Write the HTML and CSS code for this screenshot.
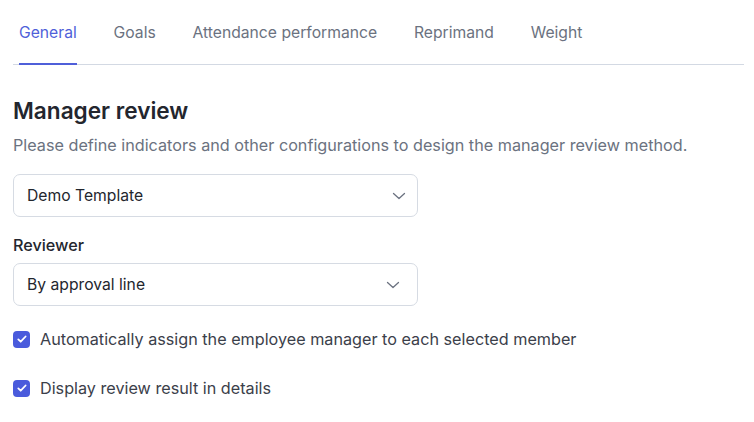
FILE: index.html
```html
<!DOCTYPE html>
<html lang="en">
<head>
    <meta charset="UTF-8">
    <meta name="viewport" content="width=device-width, initial-scale=1.0">
    <title>Manager review</title>
    <link rel="stylesheet" href="styles.css">
</head>
<body>
    <div class="page">
        <nav class="tabs">
            <a class="tab active" href="#">General</a>
            <a class="tab" href="#">Goals</a>
            <a class="tab" href="#">Attendance performance</a>
            <a class="tab" href="#">Reprimand</a>
            <a class="tab" href="#">Weight</a>
        </nav>

        <section class="review">
            <h2 class="title">Manager review</h2>
            <p class="subtitle">Please define indicators and other configurations to design the manager review method.</p>

            <div class="select template-select">
                <span>Demo Template</span>
                <svg class="chevron" width="14" height="14" viewBox="0 0 14 14"><path d="M1.5 4.5l5.5 5 5.5-5" fill="none" stroke="currentColor" stroke-width="1.3" stroke-linecap="round" stroke-linejoin="round"/></svg>
            </div>

            <label class="field-label">Reviewer</label>
            <div class="select reviewer-select">
                <span>By approval line</span>
                <svg class="chevron" width="14" height="14" viewBox="0 0 14 14"><path d="M1.5 4.5l5.5 5 5.5-5" fill="none" stroke="currentColor" stroke-width="1.3" stroke-linecap="round" stroke-linejoin="round"/></svg>
            </div>

            <div class="checks">
                <label class="check">
                    <span class="box"><svg width="16" height="16" viewBox="0 0 16 16"><path d="M4.3 8.4l2.4 2.3 4.9-5.2" fill="none" stroke="#fff" stroke-width="1.8" stroke-linecap="round" stroke-linejoin="round"/></svg></span>
                    Automatically assign the employee manager to each selected member
                </label>
                <label class="check">
                    <span class="box"><svg width="16" height="16" viewBox="0 0 16 16"><path d="M4.3 8.4l2.4 2.3 4.9-5.2" fill="none" stroke="#fff" stroke-width="1.8" stroke-linecap="round" stroke-linejoin="round"/></svg></span>
                    Display review result in details
                </label>
            </div>
        </section>
    </div>
</body>
</html>
```

FILE: styles.css
```css
body {
  margin: 0;
  background: #ffffff;
  font-family: 'Inter', 'Noto Sans', sans-serif;
  color: #23262e;
}

.page {
  padding: 0 10px 0 13px;
}

/* Tab strip */
.tabs {
  display: flex;
  gap: 36.8px;
  padding: 0 6px;
  border-bottom: 1px solid #d3d9e3;
}

.tab {
  padding: 22px 0 19px;
  font-size: 15.7px;
  line-height: 22px;
  color: #6b7280;
  text-decoration: none;
  border-bottom: 2px solid transparent;
  margin-bottom: -1px;
}

.tab.active {
  color: #4f5fd9;
  border-bottom-color: #4f5fd9;
}

/* Review settings */
.review {
  padding-top: 32px;
}

.title {
  margin: 0;
  font-size: 22.6px;
  line-height: 28px;
  font-weight: 600;
  color: #23262e;
}

.subtitle {
  margin: 9px 0 0;
  font-size: 16.2px;
  line-height: 22px;
  color: #6b7280;
}

.select {
  width: 405px;
  height: 43px;
  box-sizing: border-box;
  display: flex;
  align-items: center;
  justify-content: space-between;
  padding: 0 11px 0 13px;
  border: 1px solid #d6dbe3;
  border-radius: 7px;
  font-size: 15.7px;
  color: #23262e;
}

.template-select {
  margin-top: 18px;
}

.reviewer-select {
  padding-right: 17px;
}

.chevron {
  color: #6b7280;
}

.field-label {
  display: block;
  margin: 17px 0 7px;
  font-size: 16.2px;
  line-height: 22px;
  font-weight: 500;
  color: #23262e;
}

.checks {
  display: flex;
  flex-direction: column;
  gap: 27px;
  margin-top: 22px;
}

.check {
  display: flex;
  align-items: center;
  gap: 10px;
  font-size: 16.2px;
  line-height: 22px;
  color: #3b404a;
}

.box {
  width: 17px;
  height: 17px;
  border-radius: 4px;
  background: #4a5bdc;
  display: flex;
  align-items: center;
  justify-content: center;
}
```
